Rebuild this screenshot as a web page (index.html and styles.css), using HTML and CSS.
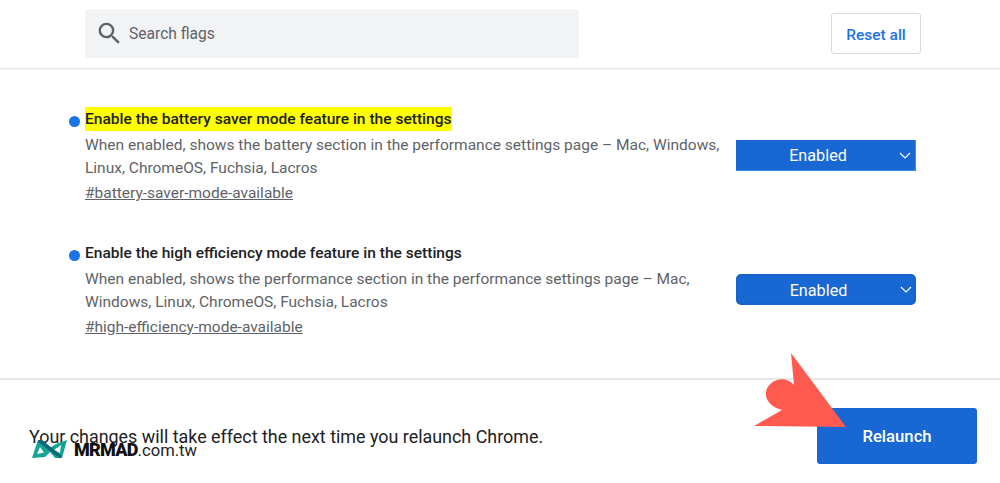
FILE: index.html
```html
<!DOCTYPE html>
<html lang="en">
<head>
<meta charset="utf-8">
<title>Experiments</title>
<link rel="stylesheet" href="styles.css">
</head>
<body>
<div class="page">
  <header class="top">
    <div class="search">
      <svg class="search-icon" viewBox="0 0 24 24" aria-hidden="true"><path d="M15.5 14h-.79l-.28-.27A6.47 6.47 0 0 0 16 9.5 6.5 6.5 0 1 0 9.5 16c1.61 0 3.09-.59 4.23-1.57l.27.28v.79l5 4.99L20.49 19l-4.99-5zm-6 0C7.01 14 5 11.99 5 9.5S7.01 5 9.5 5 14 7.01 14 9.5 11.99 14 9.5 14z"/></svg>
      <span class="search-text">Search flags</span>
    </div>
    <button class="reset">Reset all</button>
  </header>
  <main class="flags">
    <section class="flag">
      <span class="dot"></span>
      <div class="info">
        <h3 class="name"><mark class="hl">Enable the battery saver mode feature in the settings</mark></h3>
        <p class="desc">When enabled, shows the battery section in the performance settings page – Mac, Windows, Linux, ChromeOS, Fuchsia, Lacros</p>
        <a class="link">#battery-saver-mode-available</a>
      </div>
      <div class="select square"><span class="select-text">Enabled</span><svg class="chev" viewBox="0 0 12 7"><path d="M1 1l5 5 5-5"/></svg></div>
    </section>
    <section class="flag">
      <span class="dot"></span>
      <div class="info">
        <h3 class="name">Enable the high efficiency mode feature in the settings</h3>
        <p class="desc">When enabled, shows the performance section in the performance settings page – Mac, Windows, Linux, ChromeOS, Fuchsia, Lacros</p>
        <a class="link">#high-efficiency-mode-available</a>
      </div>
      <div class="select rounded"><span class="select-text">Enabled</span><svg class="chev" viewBox="0 0 12 7"><path d="M1 1l5 5 5-5"/></svg></div>
    </section>
  </main>
  <footer class="bottom">
    <span class="notice">Your changes will take effect the next time you relaunch Chrome.</span>
    <button class="relaunch">Relaunch</button>
  </footer>
  <div class="logo">
    <svg class="logo-mark" viewBox="0 0 36 21"><path class="mark-teal" fill-rule="evenodd" d="M6 1L14 6 18 9 24 5 35 1 30 19 23 19 18 13 13 18 0 19zM8 8L5 15 12 13.5zM29 6L22 11 28 14z"/><path class="mark-dark" d="M6 1L10 1 30 17 28 19.5 6 3z"/></svg>
    <span class="logo-text"><b class="logo-b">MRMAD</b>.com.tw</span>
  </div>
  <svg class="arrow" viewBox="0 0 92 74"><path d="M37 0L92 74 0 73 28 57C16 54 11 46 12 39 14 27 31 21 40 32Z"/></svg>
</div>
</body>
</html>
```
FILE: styles.css
```css
* { box-sizing: border-box; }
html, body { margin: 0; padding: 0; }
body { background: #fff; font-family: Roboto, "Liberation Sans", sans-serif; color: #202124; overflow: hidden; }
.page { position: relative; width: 1000px; height: 483px; overflow: hidden; display: flex; flex-direction: column; }

.top { height: 69px; flex: none; display: flex; align-items: flex-start; justify-content: space-between; padding: 9px 79px 0 85px; border-bottom: 1px solid #e6e6e7; box-shadow: 0 1px 1px rgba(0,0,0,.05); }
.search { width: 494px; height: 49px; background: #f1f3f4; border-radius: 3px; display: flex; align-items: center; padding-left: 10px; gap: 5px; }
.search-icon { width: 29px; height: 29px; fill: #5f6368; flex: none; }
.search-text { font-size: 15.6px; color: #5f6368; }
.reset { margin-top: 4px; width: 90px; height: 41px; background: #fff; border: 1px solid #dadce0; border-radius: 3px; color: #1a73e8; font: 500 15.5px/41px Roboto, sans-serif; padding: 1px 0 0; }

.flags { flex: none; height: 311px; padding: 39px 84px 0 68px; display: flex; flex-direction: column; gap: 38px; border-bottom: 2px solid #e8e8e9; }
.flag { display: flex; align-items: flex-start; position: relative; }
.dot { width: 11px; height: 11px; border-radius: 50%; background: #1a73e8; margin: 8px 5px 0 1px; flex: none; }
.info { width: 651px; flex: none; }
.name { margin: 0; font-size: 15.55px; font-weight: 500; line-height: 23px; color: #202124; }
.hl { background: #ffff00; color: inherit; padding: 3px 0; }
.desc { margin: 3px 0 0; font-size: 15.5px; line-height: 22.5px; color: #5f6368; }
.link { display: inline-block; margin-top: 3px; font-size: 15.5px; line-height: 22px; color: #5f6368; text-decoration: underline; }

.select { width: 180px; height: 31px; margin-top: 32px; background: #1967d2; color: #fff; position: relative; display: flex; align-items: center; justify-content: center; padding: 1px 15px 0 0; font-size: 16.2px; }
.select.square { border: 1px solid #3d8bec; border-width: 0 1px 1px 0; }
.select.rounded { border: 2px solid #1763cc; border-radius: 5px; }
.chev { position: absolute; right: 4px; top: 12px; width: 12px; height: 7px; fill: none; stroke: #fff; stroke-width: 1.1; }
.rounded .chev { right: 2px; top: 10px; }

.bottom { flex: 1; display: flex; justify-content: space-between; align-items: flex-start; padding: 28px 23px 0 29px; }
.notice { font-size: 17.9px; margin-top: 18px; color: #202124; }
.relaunch { width: 160px; height: 56px; background: #1967d2; color: #fff; border: 0; border-radius: 3px; font: 500 16.7px Roboto, sans-serif; padding: 1px 0 0; }

.logo { position: absolute; left: 32px; top: 439px; display: flex; align-items: center; gap: 6px; height: 21px; }
.logo-mark { width: 36px; height: 21px; }
.mark-teal { fill: #12a594; }
.mark-dark { fill: #14677a; }
.logo-text { font-size: 16.6px; color: #222; font-family: Roboto, sans-serif; }
.logo-b { font-size: 18px; letter-spacing: -.75px; font-weight: 900; color: #111; }

.arrow { position: absolute; left: 754px; top: 353px; width: 92px; height: 74px; fill: #fe5a4f; overflow: visible; }
```
